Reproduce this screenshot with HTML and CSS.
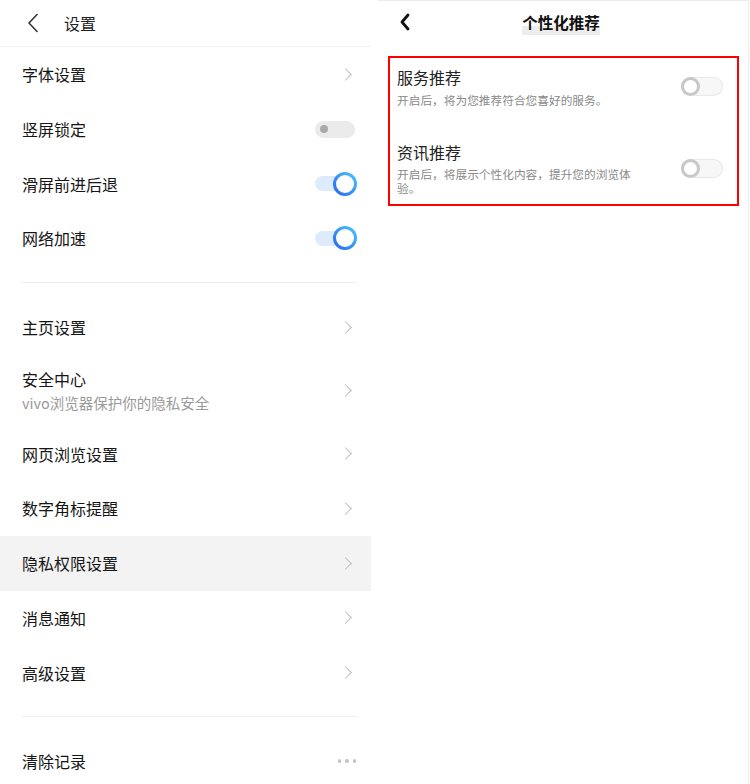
FILE: index.html
```html
<!DOCTYPE html>
<html lang="zh-CN">
<head>
    <meta charset="UTF-8">
    <meta name="viewport" content="width=device-width, initial-scale=1.0">
    <title>设置 - 个性化推荐</title>
    <link rel="stylesheet" href="styles.css">
</head>
<body>
    <div class="page">
        <!-- 左侧：设置 -->
        <div class="panel-left">
            <div class="top-bar">
                <svg class="back-thin" width="14" height="20" viewBox="0 0 14 20">
                    <polyline points="11,1.5 3,10 11,18.5" fill="none" stroke="#333" stroke-width="1.6" stroke-linejoin="round" stroke-linecap="round"/>
                </svg>
                <span class="top-title">设置</span>
            </div>

            <div class="row"><span class="row-name">字体设置</span><span class="arrow"></span></div>
            <div class="row">
                <span class="row-name">竖屏锁定</span>
                <span class="switch-off"><span class="dot"></span></span>
            </div>
            <div class="row">
                <span class="row-name">滑屏前进后退</span>
                <span class="switch-on"><span class="knob"></span></span>
            </div>
            <div class="row">
                <span class="row-name">网络加速</span>
                <span class="switch-on"><span class="knob"></span></span>
            </div>

            <div class="divider"></div>

            <div class="row"><span class="row-name">主页设置</span><span class="arrow"></span></div>
            <div class="row row-tall">
                <div>
                    <div class="row-name">安全中心</div>
                    <div class="row-sub">vivo浏览器保护你的隐私安全</div>
                </div>
                <span class="arrow"></span>
            </div>
            <div class="row"><span class="row-name">网页浏览设置</span><span class="arrow"></span></div>
            <div class="row"><span class="row-name">数字角标提醒</span><span class="arrow"></span></div>
            <div class="row active"><span class="row-name">隐私权限设置</span><span class="arrow"></span></div>
            <div class="row"><span class="row-name">消息通知</span><span class="arrow"></span></div>
            <div class="row"><span class="row-name">高级设置</span><span class="arrow"></span></div>

            <div class="divider"></div>

            <div class="row">
                <span class="row-name">清除记录</span>
                <span class="more"><i></i><i></i><i></i></span>
            </div>
        </div>

        <!-- 右侧：个性化推荐 -->
        <div class="panel-right">
            <div class="top-bar-right">
                <svg class="back-bold" width="14" height="20" viewBox="0 0 14 20">
                    <polyline points="10,3 4,10 10,17" fill="none" stroke="#111" stroke-width="2.8" stroke-linejoin="round" stroke-linecap="round"/>
                </svg>
                <span class="page-title">个性化推荐</span>
            </div>

            <div class="red-box">
                <div class="rec-item">
                    <div class="rec-text">
                        <div class="rec-name">服务推荐</div>
                        <div class="rec-desc">开启后，将为您推荐符合您喜好的服务。</div>
                    </div>
                    <span class="switch-grey"><span class="ring"></span></span>
                </div>
                <div class="rec-item second">
                    <div class="rec-text">
                        <div class="rec-name">资讯推荐</div>
                        <div class="rec-desc">开启后，将展示个性化内容，提升您的浏览体验。</div>
                    </div>
                    <span class="switch-grey"><span class="ring"></span></span>
                </div>
            </div>
        </div>
    </div>
</body>
</html>
```

FILE: styles.css
```css
body {
    margin: 0;
    background: #fff;
    font-family: "Noto Sans CJK SC", "Noto Sans", sans-serif;
    color: #151515;
}

.page {
    display: flex;
    width: 750px;
    height: 784px;
    overflow: hidden;
}

/* ---------- 左侧 ---------- */
.panel-left {
    width: 371px;
    flex-shrink: 0;
}

.top-bar {
    height: 46px;
    display: flex;
    align-items: center;
    border-bottom: 1px solid #f1f1f1;
}

.back-thin {
    margin-left: 26px;
    margin-top: -1px;
}

.top-title {
    margin-left: 24px;
    font-size: 16px;
    line-height: 22px;
    color: #222;
}

.row {
    height: 54.7px;
    display: flex;
    align-items: center;
    justify-content: space-between;
    padding: 0 14px 0 22px;
}

.row-tall {
    height: 72px;
}

.row.active {
    background: #f3f3f3;
}

.row-name {
    font-size: 16px;
    line-height: 22px;
}

.row-sub {
    font-size: 14.5px;
    line-height: 20px;
    color: #9a9a9a;
    margin-top: 3px;
}

.arrow {
    width: 8px;
    height: 8px;
    border-top: 1.2px solid #bdbdbd;
    border-right: 1.2px solid #bdbdbd;
    transform: rotate(45deg);
    margin-right: 7px;
}

.divider {
    height: 1px;
    background: #f0f0f0;
    margin: 16px 14px 17px 21px;
}

.switch-off {
    width: 40px;
    height: 17px;
    border-radius: 9px;
    background: #ebebeb;
    display: flex;
    align-items: center;
    margin-right: 2px;
}

.switch-off .dot {
    width: 8px;
    height: 8px;
    border-radius: 50%;
    background: #a9a9a9;
    margin-left: 5px;
}

.switch-on {
    position: relative;
    width: 42px;
    height: 24px;
    display: flex;
    align-items: center;
}

.switch-on::before {
    content: "";
    width: 32px;
    height: 15px;
    border-radius: 8px;
    background: #deebfd;
}

.switch-on .knob {
    position: absolute;
    right: 0;
    top: 0;
    width: 18px;
    height: 18px;
    border-radius: 50%;
    border: 3px solid transparent;
    background: linear-gradient(#fff, #fff) padding-box,
                linear-gradient(45deg, #2a62ee, #4ccafc) border-box;
}

.more {
    display: flex;
    gap: 4px;
    margin-right: 1px;
}

.more i {
    width: 3.5px;
    height: 3.5px;
    border-radius: 50%;
    background: #c4c4c4;
}

/* ---------- 右侧 ---------- */
.panel-right {
    width: 370px;
    margin-left: 7px;
    border-top: 1px solid #ececec;
    border-right: 1px solid #ececec;
    flex-shrink: 0;
}

.top-bar-right {
    height: 46px;
    position: relative;
    display: flex;
    align-items: center;
    justify-content: center;
}

.back-bold {
    position: absolute;
    left: 20px;
    top: 11px;
}

.page-title {
    font-size: 15.5px;
    font-weight: bold;
    line-height: 22px;
    color: #111;
    margin-top: -3px;
    margin-left: -4px;
    background: linear-gradient(to bottom, transparent 62%, #ededed 62%);
    padding-bottom: 2px;
}

.red-box {
    margin: 9px 9px 0 10px;
    border: 2px solid #f00;
}

.rec-item {
    display: flex;
    align-items: center;
    justify-content: space-between;
    padding: 8px 14px 8px 7px;
}

.rec-item.second {
    margin-top: 18px;
    padding-bottom: 9px;
}

.rec-name {
    font-size: 16px;
    line-height: 22px;
    color: #222;
}

.rec-desc {
    font-size: 11.7px;
    line-height: 14px;
    color: #8a8a8a;
    margin-top: 5px;
    width: 240px;
}

.rec-item.second .rec-desc {
    margin-top: 4px;
}

.switch-grey {
    position: relative;
    width: 42px;
    height: 19px;
    border-radius: 10px;
    background: #f7f7f7;
    box-shadow: inset 0 0 0 1px #e9e9e9;
}

.switch-grey .ring {
    position: absolute;
    left: 0;
    top: 0;
    width: 13px;
    height: 13px;
    border-radius: 50%;
    border: 3px solid #c8c8c8;
    background: #fff;
}
```
